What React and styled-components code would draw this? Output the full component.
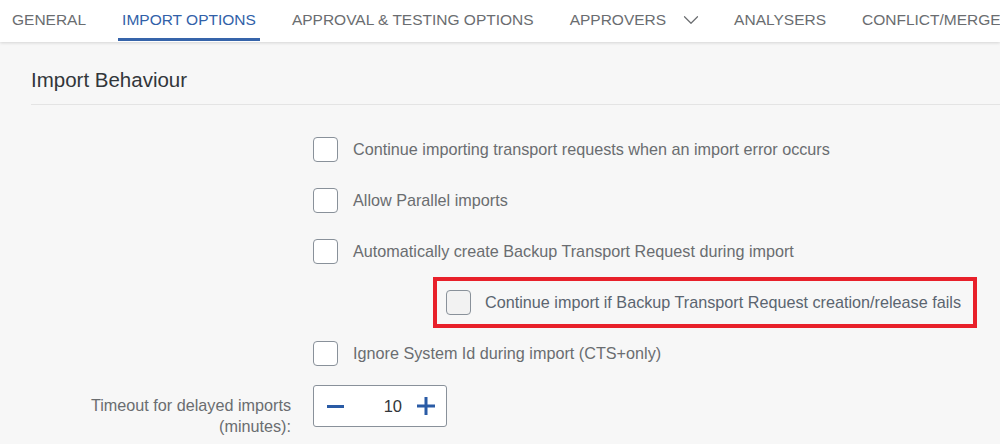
import React from 'react';
import styled, { createGlobalStyle } from 'styled-components';
import { ChevronDown } from 'lucide-react';

const GlobalStyle = createGlobalStyle`
  html, body {
    margin: 0;
    padding: 0;
    background: #f7f7f7;
    font-family: "Liberation Sans", Arial, sans-serif;
    color: #32363a;
  }
`

const tabs = [
  { label: 'GENERAL' },
  { label: 'IMPORT OPTIONS', active: true },
  { label: 'APPROVAL & TESTING OPTIONS' },
  { label: 'APPROVERS', menu: true },
  { label: 'ANALYSERS' },
  { label: 'CONFLICT/MERGE' },
]

const options = [
  { text: 'Continue importing transport requests when an import error occurs' },
  { text: 'Allow Parallel imports' },
  { text: 'Automatically create Backup Transport Request during import' },
  { text: 'Continue import if Backup Transport Request creation/release fails', nested: true },
  { text: 'Ignore System Id during import (CTS+only)' },
]

function App() {
  return <Page>
    <GlobalStyle />
    <TabBar>
      {tabs.map(t => (
        <Tab key={t.label} active={t.active}>
          {t.label}
          {t.menu && <MenuIcon size={26} strokeWidth={1.1} color="#6a6d70" />}
        </Tab>
      ))}
    </TabBar>

    <Section>
      <Heading>Import Behaviour</Heading>
      <Form>
        {options.map(o => (
          <React.Fragment key={o.text}>
            <Label />
            <OptionRow nested={o.nested}>
              <Box nested={o.nested} />
              <OptionText nested={o.nested}>{o.text}</OptionText>
            </OptionRow>
          </React.Fragment>
        ))}
        <Label>Timeout for delayed imports<br />(minutes):</Label>
        <Stepper>
          <StepButton aria-label="decrease">
            <svg width="17" height="17" viewBox="0 0 17 17"><rect x="0" y="7" width="17" height="3" fill="#2a5ba5" /></svg>
          </StepButton>
          <StepValue>10</StepValue>
          <StepButton aria-label="increase">
            <svg width="18" height="18" viewBox="0 0 18 18"><rect x="0" y="7.5" width="18" height="3" fill="#2a5ba5" /><rect x="7.5" y="0" width="3" height="18" fill="#2a5ba5" /></svg>
          </StepButton>
        </Stepper>
      </Form>
    </Section>
  </Page>
}

const Page = styled.div`
  width: 1000px;
  height: 444px;
  overflow: hidden;
  background: #f7f7f7;
`
const TabBar = styled.nav`
  display: flex;
  align-items: stretch;
  gap: 28px;
  height: 42px;
  padding-left: 8px;
  background: #fff;
  box-shadow: 0 1px 3px rgba(0, 0, 0, 0.14);
  white-space: nowrap;
  position: relative;
`
const Tab = styled.div`
  display: flex;
  align-items: center;
  padding: 0 4px;
  font-size: 15.5px;
  color: ${p => p.active ? '#3161a8' : '#6a6d70'};
  border-bottom: 3px solid ${p => p.active ? '#3664aa' : 'transparent'};
  padding-top: 1px;
  margin-bottom: 1px;
`
const MenuIcon = styled(ChevronDown)`
  margin-left: 12px;
  margin-right: -6px;
`
const Section = styled.section`
  padding-left: 31px;
`
const Heading = styled.h2`
  margin: 0;
  padding: 26px 0 12px;
  font-size: 20.5px;
  font-weight: normal;
  line-height: 24px;
  color: #32363a;
  border-bottom: 1px solid #e4e4e4;
`
const Form = styled.div`
  display: grid;
  grid-template-columns: 260px 1fr;
  column-gap: 22px;
  padding-top: 19px;
`
const Label = styled.div`
  text-align: right;
  font-size: 16.2px;
  line-height: 21px;
  color: #6a6d70;
  padding-top: 16px;
`
const OptionRow = styled.label`
  display: flex;
  align-items: center;
  height: 51px;
  box-sizing: border-box;
  ${p => p.nested && `
    margin-left: 120px;
    width: 544px;
    border: 4px solid #e8202a;
    padding-left: 9px;
  `}
`
const Box = styled.span`
  width: 25px;
  height: 25px;
  box-sizing: border-box;
  border: 1px solid #89919a;
  border-radius: 4px;
  background: ${p => p.nested ? '#f2f2f2' : '#fff'};
  flex-shrink: 0;
`
const OptionText = styled.span`
  margin-left: ${p => p.nested ? '14px' : '15px'};
  font-size: 16.2px;
  color: ${p => p.nested ? '#5b6570' : '#6a6d70'};
  white-space: nowrap;
`
const Stepper = styled.div`
  display: flex;
  align-items: center;
  width: 134px;
  height: 42px;
  box-sizing: border-box;
  margin-top: 6px;
  padding: 0 11px 0 13px;
  background: #fff;
  border: 1px solid #89919a;
  border-radius: 3px;
`
const StepButton = styled.span`
  display: flex;
  align-items: center;
`
const StepValue = styled.span`
  flex: 1;
  text-align: right;
  padding-right: 15px;
  font-size: 16.5px;
  color: #32363a;
`

export default App
